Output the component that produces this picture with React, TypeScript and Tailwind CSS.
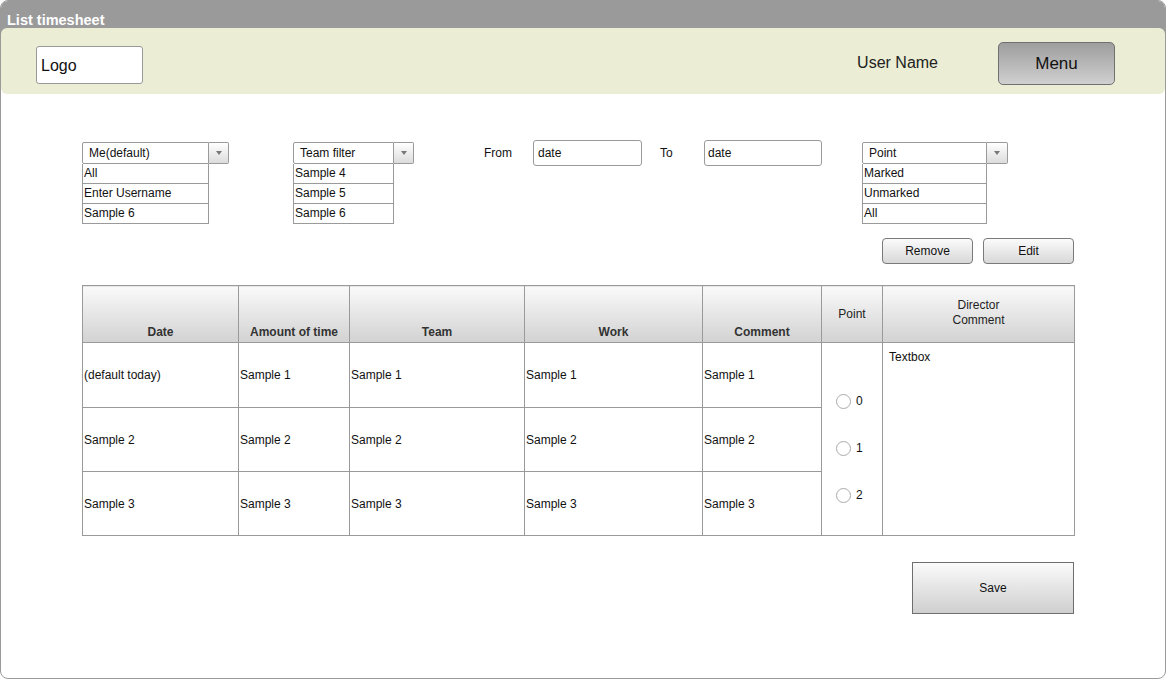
import React from "react";

const font = { fontFamily: '"Liberation Sans", Arial, sans-serif' };

function Dropdown({ label, items, w, listW }: { label: string; items: string[]; w: string; listW: string }) {
  return (
    <div className={`flex flex-col ${w}`}>
      <div className="flex h-[22px]">
        <div className={`${listW} h-[22px] border border-[#9a9a9a] rounded-l-[2px] bg-white text-[12px] leading-[20px] pl-[6px] text-[#111]`}>{label}</div>
        <div className="flex-1 h-[22px] border border-l-0 border-[#9a9a9a] rounded-r-[2px] bg-gradient-to-b from-white to-[#dcdcdc] flex items-center justify-center">
          <svg width="6" height="4" viewBox="0 0 6 4"><path d="M0 0 L6 0 L3 4 Z" fill="#777" /></svg>
        </div>
      </div>
      <div className={`${listW} border border-t-0 border-[#9a9a9a] bg-white`}>
        {items.map((it, i) => (
          <div key={i} className={`text-[12px] pl-[1px] text-[#111] ${i < items.length - 1 ? "h-[20px] leading-[19px] border-b border-[#9a9a9a]" : "h-[19px] leading-[19px]"}`}>{it}</div>
        ))}
      </div>
    </div>
  );
}

function Radio({ label }: { label: string }) {
  return (
    <div className="flex items-center h-[14px]">
      <div className="w-[15px] h-[15px] rounded-full border border-[#aaa] bg-white" />
      <span className="ml-[5px] text-[12px] text-[#111]">{label}</span>
    </div>
  );
}

export default function App() {
  const th = "border border-[#9a9a9a] bg-gradient-to-b from-[#fafafa] to-[#d2d2d2] text-[12px] text-[#333] align-bottom pb-[1px] font-bold";
  const td = "border border-[#9a9a9a] text-[12px] text-[#111] pl-[1px] align-middle";
  const rows = [
    ["(default today)", "Sample 1", "Sample 1", "Sample 1", "Sample 1"],
    ["Sample 2", "Sample 2", "Sample 2", "Sample 2", "Sample 2"],
    ["Sample 3", "Sample 3", "Sample 3", "Sample 3", "Sample 3"],
  ];
  const heights = ["h-[65px]", "h-[64px]", "h-[64px]"];
  return (
    <div style={font} className="w-[1166px] h-[679px] bg-white">
      <div className="w-[1166px] h-[679px] border border-[#9a9a9a] rounded-[8px] overflow-hidden flex flex-col bg-white">
        <div className="h-[27px] bg-[#9a9a9a] text-white font-bold text-[14.5px] pl-[6px] pt-[11px] leading-[16px]">List timesheet</div>
        <div className="bg-[linear-gradient(#9a9a9a_50%,white_50%)]">
          <div className="h-[66px] bg-[#ebeed5] rounded-[6px] flex items-start">
            <div className="ml-[35px] mt-[18px] w-[107px] h-[38px] bg-white border border-[#999] rounded-[3px] text-[16px] leading-[37px] pl-[4px] text-[#111]">Logo</div>
            <div className="ml-auto mt-[25px] text-[16px] leading-[20px] text-[#222]">User Name</div>
            <div className="ml-[60px] mr-[50px] mt-[14px] w-[117px] h-[43px] rounded-[5px] border border-[#707070] bg-gradient-to-b from-[#9e9e9e] to-[#d0d0d0] flex items-center justify-center text-[17px] text-[#111]">Menu</div>
          </div>
        </div>
        <div className="pl-[81px] pt-[46px] w-[1073px] flex flex-col">
          <div className="flex items-start">
            <div className="mt-[2px]"><Dropdown label="Me(default)" items={["All", "Enter Username", "Sample 6"]} w="w-[147px]" listW="w-[127px]" /></div>
            <div className="mt-[2px] ml-[64px]"><Dropdown label="Team filter" items={["Sample 4", "Sample 5", "Sample 6"]} w="w-[121px]" listW="w-[101px]" /></div>
            <div className="ml-[70px] w-[49px] text-[12px] leading-[26px] text-[#111]">From</div>
            <div className="w-[109px] h-[26px] border border-[#9a9a9a] rounded-[3px] text-[12px] leading-[25px] pl-[4px] text-[#111]">date</div>
            <div className="ml-[18px] w-[44px] text-[12px] leading-[26px] text-[#111]">To</div>
            <div className="w-[118px] h-[26px] border border-[#9a9a9a] rounded-[3px] text-[12px] leading-[25px] pl-[3px] text-[#111]">date</div>
            <div className="mt-[2px] ml-[40px]"><Dropdown label="Point" items={["Marked", "Unmarked", "All"]} w="w-[146px]" listW="w-[125px]" /></div>
          </div>
          <div className="flex justify-end gap-[10px] mt-[14px]">
            <div className="w-[91px] h-[26px] rounded-[4px] border border-[#7a7a7a] bg-gradient-to-b from-[#fbfbfb] to-[#d8d8d8] text-[12px] flex items-center justify-center text-[#111]">Remove</div>
            <div className="w-[91px] h-[26px] rounded-[4px] border border-[#7a7a7a] bg-gradient-to-b from-[#fbfbfb] to-[#d8d8d8] text-[12px] flex items-center justify-center text-[#111]">Edit</div>
          </div>
          <table className="mt-[21px] border-collapse table-fixed w-[992px]">
            <colgroup>
              <col className="w-[156px]" />
              <col className="w-[111px]" />
              <col className="w-[175px]" />
              <col className="w-[178px]" />
              <col className="w-[119px]" />
              <col className="w-[61px]" />
              <col className="w-[192px]" />
            </colgroup>
            <thead>
              <tr className="h-[57px]">
                <th className={th}>Date</th>
                <th className={th}>Amount of time</th>
                <th className={th}>Team</th>
                <th className={th}>Work</th>
                <th className={th}>Comment</th>
                <th className="border border-[#9a9a9a] bg-gradient-to-b from-[#fafafa] to-[#d2d2d2] text-[12px] text-[#222] font-normal align-middle">Point</th>
                <th className="border border-[#9a9a9a] bg-gradient-to-b from-[#fafafa] to-[#d2d2d2] text-[12px] text-[#222] font-normal align-middle leading-[15px] pb-[2px]">Director<br />Comment</th>
              </tr>
            </thead>
            <tbody>
              {rows.map((r, i) => (
                <tr key={i} className={heights[i]}>
                  {r.map((c, j) => (
                    <td key={j} className={td}>{c}</td>
                  ))}
                  {i === 0 && (
                    <>
                      <td rowSpan={3} className="border border-[#9a9a9a] align-top">
                        <div className="flex flex-col pl-[14px] pt-[51px] gap-[33px]">
                          <Radio label="0" />
                          <Radio label="1" />
                          <Radio label="2" />
                        </div>
                      </td>
                      <td rowSpan={3} className="border border-[#9a9a9a] align-top text-[12px] text-[#111] pl-[6px] pt-[5px]">Textbox</td>
                    </>
                  )}
                </tr>
              ))}
            </tbody>
          </table>
          <div className="flex justify-end mt-[26px]">
            <div className="w-[162px] h-[52px] border border-[#6e6e6e] bg-gradient-to-b from-[#fafafa] to-[#cfcfcf] text-[12px] flex items-center justify-center text-[#111]">Save</div>
          </div>
        </div>
      </div>
    </div>
  );
}
